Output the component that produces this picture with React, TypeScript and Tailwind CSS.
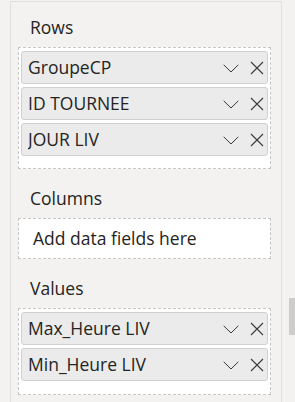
import React from 'react';

const Chevron = () => (
  <svg width="16" height="9" viewBox="0 0 16 9" fill="none">
    <path d="M0.7 0.8 L8 8 L15.3 0.8" stroke="#3b3a39" strokeWidth="1" />
  </svg>
);

const Close = () => (
  <svg width="14" height="14" viewBox="0 0 14 14" fill="none">
    <path d="M1 1 L13 13 M13 1 L1 13" stroke="#3b3a39" strokeWidth="1.1" />
  </svg>
);

const Field: React.FC<{ label: string }> = ({ label }) => (
  <div className="h-[33px] flex items-center bg-[#ebebeb] border border-[#d2d0ce] rounded-[3px] pl-[6px] pr-[3px]">
    <span className="flex-1 truncate">{label}</span>
    <span className="flex items-center mt-[2px]">
      <Chevron />
    </span>
    <span className="flex items-center ml-[11px]">
      <Close />
    </span>
  </div>
);

const Title: React.FC<{ text: string; first?: boolean }> = ({ text, first }) => (
  <div className={`${first ? 'h-[45px]' : 'h-[49px]'} flex items-end pl-[12px] pb-[8px]`}>
    <span className="leading-[24px]">{text}</span>
  </div>
);

export default function App() {
  const rows = ['GroupeCP', 'ID TOURNEE', 'JOUR LIV'];
  const values = ['Max_Heure LIV', 'Min_Heure LIV'];

  return (
    <div
      className="relative w-[295px] h-[402px] overflow-hidden bg-[#f3f2f1] text-[#252423] text-[17.5px]"
      style={{ fontFamily: '"Open Sans", "Noto Sans", sans-serif' }}
    >
      <div className="ml-[10px] mt-[1px] w-[272px] h-[410px] border-l border-t border-r border-[#e1dfdd] pl-[7px] pr-[10px]">
        <Title text="Rows" first />
        <div className="border border-dashed border-[#c8c6c4] bg-white px-[2px] pt-[3px] h-[122px] flex flex-col gap-[3px]">
          {rows.map((r) => (
            <Field key={r} label={r} />
          ))}
        </div>

        <Title text="Columns" />
        <div className="h-[41px] border border-dashed border-[#c8c6c4] bg-white flex items-center pl-[14px]">
          Add data fields here
        </div>

        <Title text="Values" />
        <div className="border border-dashed border-[#c8c6c4] bg-white px-[2px] pt-[3px] h-[87px] flex flex-col gap-[3px]">
          {values.map((v) => (
            <Field key={v} label={v} />
          ))}
        </div>
      </div>

      {/* scrollbar thumb */}
      <div className="absolute left-[289px] top-[298px] w-[6px] h-[37px] bg-[#cfcdcb]" />
    </div>
  );
}
